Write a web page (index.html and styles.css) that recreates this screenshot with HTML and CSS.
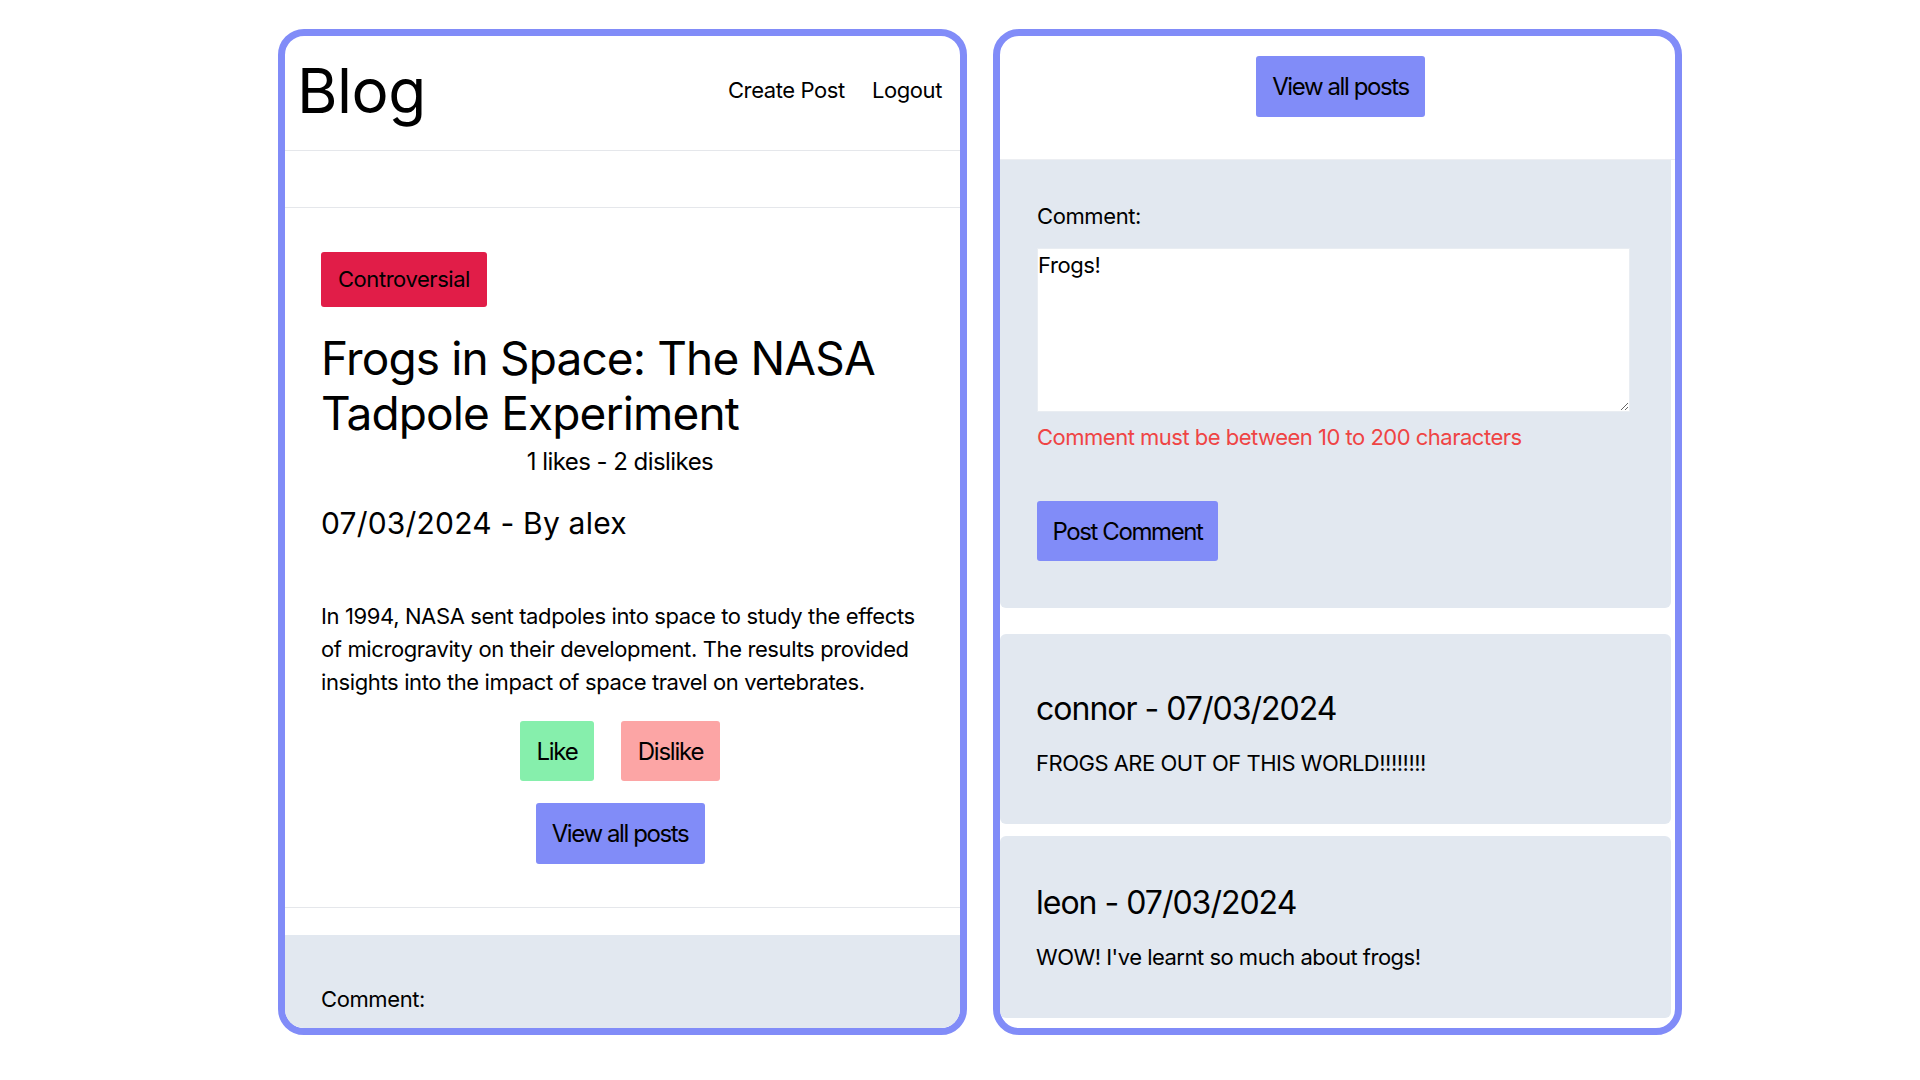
FILE: index.html
```html
<!DOCTYPE html>
<html lang="en">
<head>
<meta charset="utf-8">
<title>Blog</title>
<link rel="stylesheet" href="styles.css">
</head>
<body>
<div class="stage">
  <section class="frame">
    <header class="topbar">
      <h1 class="brand">Blog</h1>
      <nav class="nav">
        <a href="#">Create Post</a>
        <a href="#">Logout</a>
      </nav>
    </header>
    <div class="spacer"></div>
    <article class="post">
      <span class="badge">Controversial</span>
      <h2 class="post-title">Frogs in Space: The NASA Tadpole Experiment</h2>
      <p class="votes">1 likes - 2 dislikes</p>
      <p class="meta">07/03/2024 - By alex</p>
      <p class="body-text">In 1994, NASA sent tadpoles into space to study the effects of microgravity on their development. The results provided insights into the impact of space travel on vertebrates.</p>
      <div class="vote-row">
        <button class="btn btn-like">Like</button>
        <button class="btn btn-dislike">Dislike</button>
      </div>
      <div class="center-row">
        <button class="btn btn-primary">View all posts</button>
      </div>
    </article>
    <div class="form-panel form-panel-left">
      <label class="label">Comment:</label>
    </div>
  </section>

  <section class="frame">
    <div class="top-action">
      <button class="btn btn-primary">View all posts</button>
    </div>
    <form class="form-panel form-panel-right">
      <label class="label" for="c">Comment:</label>
      <textarea id="c" class="comment-input">Frogs!</textarea>
      <p class="error">Comment must be between 10 to 200 characters</p>
      <button type="button" class="btn btn-primary btn-post">Post Comment</button>
    </form>
    <div class="comments">
      <div class="comment-card">
        <h3 class="comment-head">connor - 07/03/2024</h3>
        <p class="comment-text">FROGS ARE OUT OF THIS WORLD!!!!!!!!</p>
      </div>
      <div class="comment-card">
        <h3 class="comment-head">leon - 07/03/2024</h3>
        <p class="comment-text">WOW! I've learnt so much about frogs!</p>
      </div>
    </div>
  </section>
</div>
</body>
</html>
```

FILE: styles.css
```css
* { box-sizing: border-box; }

html, body {
  margin: 0;
  padding: 0;
  background: #ffffff;
  font-family: Inter, "Noto Sans", "Liberation Sans", sans-serif;
  color: #000;
}

.stage {
  display: flex;
  gap: 26px;
  padding: 29px 0 0 278px;
}

.frame {
  width: 689px;
  height: 1006px;
  border: 7px solid #818cf8;
  border-radius: 26px;
  overflow: hidden;
  background: #fff;
  display: flex;
  flex-direction: column;
}

/* header */
.topbar {
  height: 115px;
  flex: none;
  display: flex;
  align-items: center;
  justify-content: space-between;
  padding: 0 18px 0 12px;
  border-bottom: 1px solid #e5e7eb;
}

.brand {
  margin: -5px 0 0;
  font-size: 62px;
  line-height: 1;
  font-weight: 400;
  letter-spacing: -0.5px;
}

.nav {
  display: flex;
  gap: 27px;
  margin-top: -6px;
}

.nav a {
  color: #000;
  text-decoration: none;
  font-size: 22px;
  line-height: 33px;
  letter-spacing: -0.4px;
}

.spacer {
  height: 57px;
  flex: none;
  border-bottom: 1px solid #e5e7eb;
}

/* post */
.post {
  flex: none;
  padding: 44px 41px 43px 36px;
  border-bottom: 1px solid #e5e7eb;
  display: flex;
  flex-direction: column;
  align-items: flex-start;
}

.badge {
  background: #e11d48;
  font-size: 22px;
  line-height: 33px;
  letter-spacing: -0.45px;
  padding: 11px 17px;
  border-radius: 3px;
}

.post-title {
  margin: 24px 0 0;
  font-size: 46px;
  line-height: 55px;
  font-weight: 400;
  letter-spacing: -0.85px;
}

.votes {
  align-self: stretch;
  text-align: center;
  margin: 2px 0 0;
  font-size: 24px;
  line-height: 38px;
  letter-spacing: -0.55px;
}

.meta {
  margin: 22px 0 0;
  font-size: 30px;
  line-height: 41px;
  letter-spacing: 0.2px;
}

.body-text {
  margin: 56px 0 0;
  font-size: 22px;
  line-height: 33px;
  letter-spacing: -0.38px;
}

.vote-row {
  align-self: stretch;
  display: flex;
  justify-content: center;
  gap: 27px;
  margin-top: 22px;
}

.center-row {
  align-self: stretch;
  display: flex;
  justify-content: center;
  margin-top: 22px;
}

.btn {
  font-family: inherit;
  color: #000;
  border: none;
  border-radius: 3px;
  height: 60px;
  font-size: 24px;
  letter-spacing: -1.4px;
  padding: 0;
  cursor: pointer;
}

.btn-like { background: #86efac; width: 74px; letter-spacing: -1.2px; }
.btn-dislike { background: #fca5a5; width: 99px; letter-spacing: -1.2px; }
.btn-primary { background: #818cf8; width: 169px; height: 61px; }

/* comment form */
.form-panel {
  background: #e2e8f0;
  flex: none;
}

.form-panel-left {
  margin-top: 27px;
  flex: 1;
  padding: 48px 36px 0;
}

.label {
  display: block;
  font-size: 22px;
  line-height: 33px;
  letter-spacing: -0.4px;
}

.top-action {
  flex: none;
  height: 124px;
  display: flex;
  justify-content: center;
  padding: 20px 0 0 6px;
  border-bottom: 1px solid #eceef2;
}

.form-panel-right {
  margin-right: 4px;
  padding: 40px 37px 47px;
  border-radius: 0 0 6px 6px;
}

.comment-input {
  display: block;
  margin-top: 15px;
  width: 593px;
  height: 164px;
  border: 1px solid #e9edf2;
  background: #fff;
  padding: 0;
  font-family: inherit;
  font-size: 22px;
  line-height: 33px;
  letter-spacing: -0.4px;
  color: #000;
  border-radius: 0;
}

.error {
  margin: 9px 0 0;
  color: #ef4444;
  font-size: 22px;
  line-height: 33px;
  letter-spacing: -0.5px;
}

.btn-post {
  margin-top: 47px;
  width: 181px;
  height: 60px;
}

/* comments */
.comments {
  flex: none;
  margin-top: 26px;
  margin-right: 4px;
  display: flex;
  flex-direction: column;
  gap: 12px;
}

.comment-card {
  background: #e2e8f0;
  border-radius: 6px;
  padding: 45px 36px 44px;
}

.comment-card:first-child {
  padding-top: 53px;
}

.comment-head {
  margin: 0;
  font-size: 32px;
  line-height: 44px;
  font-weight: 400;
  letter-spacing: -1px;
}

.comment-text {
  margin: 16px 0 0;
  font-size: 22px;
  line-height: 33px;
  letter-spacing: -0.5px;
}
```
